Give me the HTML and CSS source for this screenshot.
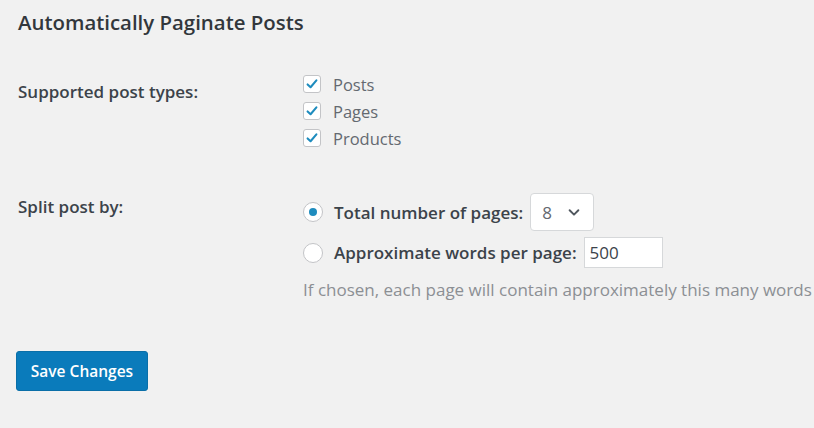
FILE: index.html
```html
<!DOCTYPE html>
<html lang="en">
<head>
<meta charset="utf-8">
<title>Automatically Paginate Posts</title>
<link rel="stylesheet" href="styles.css">
</head>
<body>
<div class="wrap">
  <h1 class="title">Automatically Paginate Posts</h1>
  <form class="settings">
    <div class="row row-types">
      <div class="th">Supported post types:</div>
      <div class="td checks">
        <label class="check"><span class="box"><svg viewBox="0 0 20 20" width="18" height="18"><path d="M4.5 10.5 L8.2 14 L15.5 5.5" fill="none" stroke="#1e8cbe" stroke-width="2.6" stroke-linecap="round" stroke-linejoin="round"/></svg></span><span class="ctext">Posts</span></label>
        <label class="check"><span class="box"><svg viewBox="0 0 20 20" width="18" height="18"><path d="M4.5 10.5 L8.2 14 L15.5 5.5" fill="none" stroke="#1e8cbe" stroke-width="2.6" stroke-linecap="round" stroke-linejoin="round"/></svg></span><span class="ctext">Pages</span></label>
        <label class="check"><span class="box"><svg viewBox="0 0 20 20" width="18" height="18"><path d="M4.5 10.5 L8.2 14 L15.5 5.5" fill="none" stroke="#1e8cbe" stroke-width="2.6" stroke-linecap="round" stroke-linejoin="round"/></svg></span><span class="ctext">Products</span></label>
      </div>
    </div>
    <div class="row row-split">
      <div class="th th-split">Split post by:</div>
      <div class="td radios">
        <div class="radio-row r1">
          <span class="radio checked"></span>
          <span class="rtext">Total number of pages:</span>
          <span class="select"><span class="sval">8</span><svg class="chev" viewBox="0 0 16 16" width="14" height="14"><path d="M3 6 L8 11 L13 6" fill="none" stroke="#50575e" stroke-width="2.2" stroke-linecap="round" stroke-linejoin="round"/></svg></span>
        </div>
        <div class="radio-row r2">
          <span class="radio"></span>
          <span class="rtext">Approximate words per page:</span>
          <span class="input">500</span>
        </div>
        <p class="desc">If chosen, each page will contain approximately this many words</p>
      </div>
    </div>
    <div class="submit">
      <button type="button" class="button-primary">Save Changes</button>
    </div>
  </form>
</div>
</body>
</html>
```

FILE: styles.css
```css
html, body {
  margin: 0;
  padding: 0;
  background: #f1f1f1;
}
body {
  font-family: "Open Sans", "Noto Sans", sans-serif;
  color: #3c434a;
  width: 814px;
  height: 428px;
  overflow: hidden;
  line-height: 23px;
}
.wrap {
  padding: 0 0 0 18px;
}
.title {
  margin: 0;
  padding-top: 9px;
  font-size: 20.4px;
  font-weight: 600;
  line-height: 26px;
  color: #32373c;
}
.settings {
  display: flex;
  flex-direction: column;
}
.row {
  display: flex;
}
.th {
  width: 285px;
  flex: none;
  font-size: 17px;
  font-weight: 600;
  color: #3c434a;
}
.row-types {
  margin-top: 40px;
}
.row-types .th {
  padding-top: 5px;
}
.checks {
  display: flex;
  flex-direction: column;
  gap: 9px;
}
.check {
  display: flex;
  align-items: center;
  gap: 12px;
  height: 18px;
}
.box {
  width: 16px;
  height: 16px;
  border: 1px solid #c3c4c7;
  border-radius: 3px;
  background: #fff;
  display: flex;
  align-items: center;
  justify-content: center;
  flex: none;
}
.ctext {
  font-size: 16.5px;
  color: #646970;
}
.row-split {
  margin-top: 46px;
}
.th-split {
  padding-top: 2px;
}
.radios {
  display: flex;
  flex-direction: column;
}
.radio-row {
  display: flex;
  align-items: center;
}
.r1 {
  height: 38px;
}
.r2 {
  height: 31px;
  margin-top: 6px;
}
.radio {
  width: 18px;
  height: 18px;
  border: 1px solid #c3c4c7;
  border-radius: 50%;
  background: #fff;
  display: flex;
  align-items: center;
  justify-content: center;
  margin-right: 11px;
  flex: none;
}
.radio.checked::after {
  content: "";
  width: 8px;
  height: 8px;
  border-radius: 50%;
  background: #1e8cbe;
}
.rtext {
  font-size: 17px;
  font-weight: 600;
  color: #3c434a;
  margin-right: 7px;
}
.select {
  box-sizing: border-box;
  width: 64px;
  height: 38px;
  border: 1px solid #d6d8da;
  border-radius: 4px;
  background: #fff;
  display: flex;
  align-items: center;
  padding: 0 12px 0 11px;
  justify-content: space-between;
  font-size: 17px;
  color: #646970;
}
.chev {
  display: block;
}
.input {
  box-sizing: border-box;
  width: 79px;
  height: 31px;
  border: 1px solid #d6d8da;
  background: #fff;
  display: flex;
  align-items: center;
  padding-left: 5px;
  font-size: 17px;
  color: #3c434a;
}
.desc {
  margin: 10px 0 0 0;
  font-size: 17px;
  color: #8c8f94;
  white-space: nowrap;
}
.submit {
  margin-top: 50px;
}
.button-primary {
  box-sizing: border-box;
  width: 132px;
  height: 40px;
  background: #0a7bbb;
  border: 1px solid #0a6fa8;
  border-radius: 3px;
  color: #fff;
  font-family: "Open Sans", "Noto Sans", sans-serif;
  font-size: 15.5px;
  font-weight: 600;
  padding: 0;
  margin-left: -2px;
}
```
